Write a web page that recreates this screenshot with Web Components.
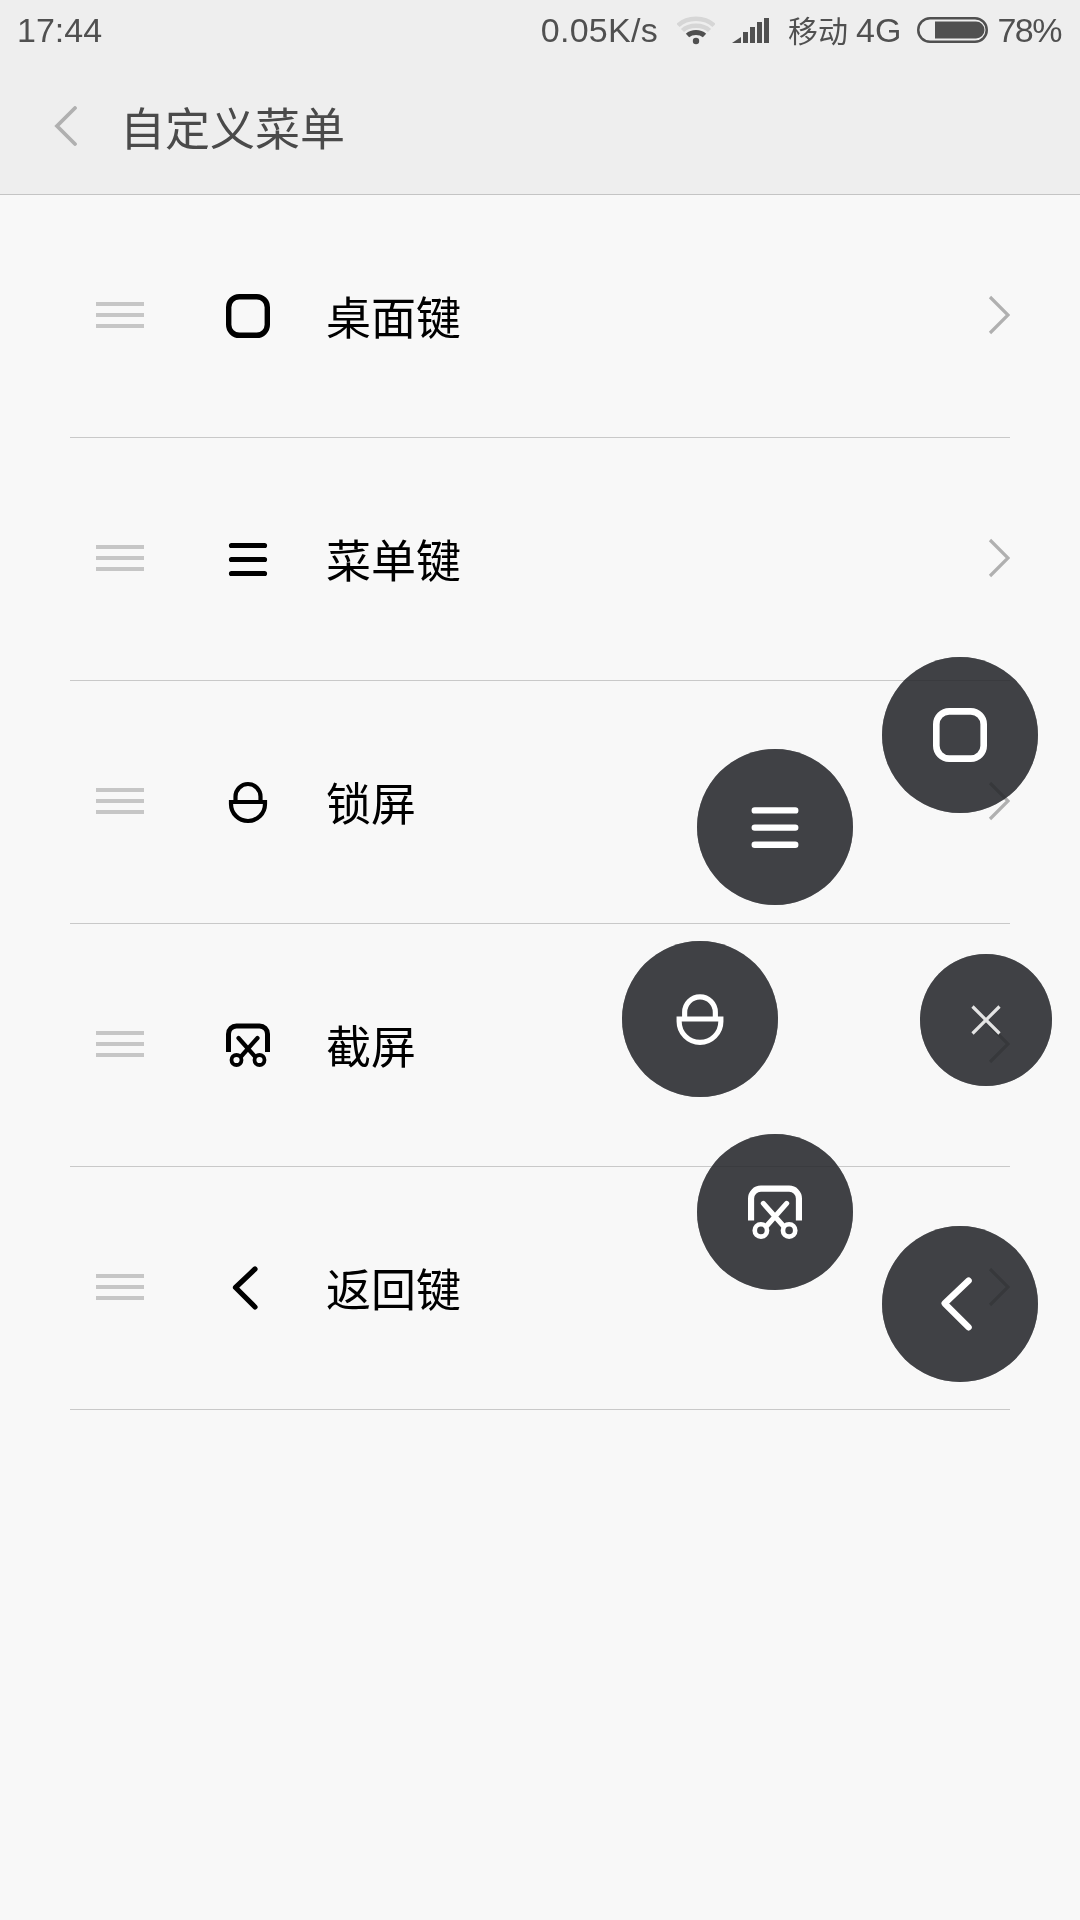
<!DOCTYPE html>
<html lang="zh">
<head>
<meta charset="utf-8">
<title>自定义菜单</title>
<style>
    html, body { margin: 0; padding: 0; background: #f8f8f8; }
    body { width: 1080px; height: 1920px; overflow: hidden; font-family: "Liberation Sans", "Noto Sans CJK SC", sans-serif; }
</style>
</head>
<body>
<status-bar></status-bar>
<title-bar>自定义菜单</title-bar>
<menu-row icon="home">桌面键</menu-row>
<menu-row icon="menu">菜单键</menu-row>
<menu-row icon="lock">锁屏</menu-row>
<menu-row icon="shot">截屏</menu-row>
<menu-row icon="back">返回键</menu-row>

<float-button icon="home" x="960" y="735"></float-button>
<float-button icon="menu" x="775" y="827"></float-button>
<float-button icon="lock" x="700" y="1019"></float-button>
<float-button icon="close" x="986" y="1020" size="132"></float-button>
<float-button icon="shot" x="775" y="1212"></float-button>
<float-button icon="back" x="960" y="1304"></float-button>

<script>
// all menu icons share a 44 unit box, the floating ones are just scaled up
const ICONS = {
    home: '<rect x="2.700" y="2.700" width="38.600" height="38.600" rx="10.500" stroke-width="5.400"/>',
    menu: '<path stroke-width="5.200" stroke-linecap="round" d="M5.500 8.500H38.500M5.500 22.500H38.500M5.500 36.500H38.500"/>',
    lock: '<path stroke-width="4.200" d="M5 22H39V24A17 17 0 0 1 5 24Z"/><path stroke-width="4.200" d="M9.500 22V16.500A12.500 12.500 0 0 1 34.500 16.500V22"/>',
    shot: '<path stroke-width="5" d="M2.500 29V11A8 8 0 0 1 10.500 3H33.500A8 8 0 0 1 41.500 11V29"/>' +
          '<path stroke-width="4.200" stroke-linecap="round" d="M12.500 15L28.500 33M31.500 15L15.500 33"/>' +
          '<circle stroke-width="3.800" cx="10.500" cy="37" r="5"/><circle stroke-width="3.800" cx="33.500" cy="37" r="5"/>',
    back: '<path stroke-width="5.200" stroke-linecap="round" stroke-linejoin="round" d="M29 3L9.500 21.500L29 41"/>',
    close: '<path stroke-width="2.600" d="M11 11L33 33M33 11L11 33"/>'
};

function iconSvg(name, size, color) {
    return `<svg width="${size}" height="${size}" viewBox="0 0 44 44" fill="none" stroke="${color}" style="display:block">${ICONS[name]}</svg>`;
}

class StatusBar extends HTMLElement {
    connectedCallback() {
        this.attachShadow({ mode: 'open' });
        this.shadowRoot.innerHTML = `
            <style>
                :host {
                    display: flex;
                    align-items: center;
                    justify-content: space-between;
                    height: 60px;
                    padding: 0 19px 0 17px;
                    background: #eeeeee;
                    color: #505050;
                    font: 34px "Liberation Sans", "Noto Sans CJK SC", sans-serif;
                }
                .right { display: flex; align-items: center; }
                svg { display: block; }
                .speed { margin-right: 19px; letter-spacing: 0.300px; }
                .wifi { margin-right: 17px; }
                .signal { margin-right: 19px; }
                .carrier { display: flex; align-items: center; gap: 8px; margin-right: 16px; }
                .carrier i { font: 30px/34px "Noto Sans CJK SC", sans-serif; margin-top: -3px; }
                .battery { margin-right: 9px; }
                .pct { letter-spacing: -1.500px; }
            </style>
            <span>17:44</span>
            <div class="right">
                <span class="speed">0.05K/s</span>
                <svg class="wifi" width="38" height="29" viewBox="0 0 38 29" fill="none" stroke-width="4.500">
                    <path stroke="#d6d6d6" d="M1 9.500C10 0.500 28 0.500 37 9.500"/>
                    <path stroke="#d6d6d6" d="M5.500 14.500C12 8 26 8 32.500 14.500"/>
                    <path stroke="#505050" stroke-width="5" d="M10.500 19.500C15 15.500 23 15.500 27.500 19.500"/>
                    <circle cx="19" cy="25" r="3.200" fill="#505050" stroke="none"/>
                </svg>
                <svg class="signal" width="37" height="25" viewBox="0 0 37 25" fill="#505050">
                    <path d="M0 25L9 19V25Z"/>
                    <rect x="11" y="14" width="5" height="11"/>
                    <rect x="18" y="9" width="5" height="16"/>
                    <rect x="25" y="4" width="5" height="21"/>
                    <rect x="32" y="0" width="5" height="25"/>
                </svg>
                <span class="carrier"><i>移动</i><span>4G</span></span>
                <svg class="battery" width="71" height="26" viewBox="0 0 71 26">
                    <rect x="1.250" y="1.250" width="68.500" height="23.500" rx="11.750" fill="none" stroke="#505050" stroke-width="2.500"/>
                    <path fill="#505050" d="M18 4.500H59A8.500 8.500 0 0 1 59 21.500H18Z"/>
                </svg>
                <span class="pct">78%</span>
            </div>
        `;
    }
}

class TitleBar extends HTMLElement {
    connectedCallback() {
        this.attachShadow({ mode: 'open' });
        this.shadowRoot.innerHTML = `
            <style>
                :host {
                    display: flex;
                    align-items: center;
                    box-sizing: border-box;
                    height: 135px;
                    padding: 0 0 3px 54px;
                    background: #eeeeee;
                    border-bottom: 1px solid #c4c4c4;
                    color: #4a4a4a;
                    font: 45px "Noto Sans CJK SC", sans-serif;
                }
                svg { display: block; margin-right: 42px; }
                .text { margin-top: 2px; }
            </style>
            <svg width="24" height="40" viewBox="0 0 24 40" fill="none" stroke="#b0b0b0" stroke-width="3.800" stroke-linecap="round">
                <path d="M21 2L3 20L21 38"/>
            </svg>
            <div class="text"><slot></slot></div>
        `;
    }
}

class MenuRow extends HTMLElement {
    connectedCallback() {
        this.attachShadow({ mode: 'open' });
        this.shadowRoot.innerHTML = `
            <style>
                :host {
                    display: flex;
                    align-items: center;
                    box-sizing: border-box;
                    height: 243px;
                    margin: 0 70px;
                    padding-left: 26px;
                    border-bottom: 1px solid #c9c9c9;
                    color: #000;
                    font: 45px "Noto Sans CJK SC", sans-serif;
                }
                .handle {
                    display: flex;
                    flex-direction: column;
                    gap: 7px;
                    width: 48px;
                    margin: -2px 82px 0 0;
                }
                .handle i { display: block; height: 4px; background: #c6c6c6; }
                .icon { display: block; margin-right: 56px; }
                .label { flex: 1; margin-top: -2px; }
                .arrow { display: block; margin-top: -2px; }
            </style>
            <div class="handle"><i></i><i></i><i></i></div>
            <div class="icon">${iconSvg(this.getAttribute('icon'), 44, '#000')}</div>
            <div class="label"><slot></slot></div>
            <svg class="arrow" width="22" height="40" viewBox="0 0 22 40" fill="none" stroke="#b0b0b0" stroke-width="3.200">
                <path d="M2 2L20 20L2 38"/>
            </svg>
        `;
    }
}

class FloatButton extends HTMLElement {
    connectedCallback() {
        const size = Number(this.getAttribute('size') || 156);
        const x = Number(this.getAttribute('x'));
        const y = Number(this.getAttribute('y'));
        const icon = this.getAttribute('icon');
        this.attachShadow({ mode: 'open' });
        // the disc darkens what is under it, the veil on top softens that again
        this.shadowRoot.innerHTML = `
            <style>
                :host {
                    position: absolute;
                    left: ${x - size / 2}px;
                    top: ${y - size / 2}px;
                    width: ${size}px;
                    height: ${size}px;
                }
                .disc, .veil {
                    position: absolute;
                    inset: 0;
                    border-radius: 50%;
                }
                .disc { background: #424347; mix-blend-mode: multiply; }
                .veil { background: rgba(64, 65, 69, 0.5); }
                .glyph {
                    position: absolute;
                    inset: 0;
                    display: flex;
                    align-items: center;
                    justify-content: center;
                }
            </style>
            <div class="disc"></div>
            <div class="veil"></div>
            <div class="glyph">${iconSvg(icon, 54, icon === 'close' ? '#e4e4e4' : '#fff')}</div>
        `;
    }
}

customElements.define('status-bar', StatusBar);
customElements.define('title-bar', TitleBar);
customElements.define('menu-row', MenuRow);
customElements.define('float-button', FloatButton);
</script>
</body>
</html>
